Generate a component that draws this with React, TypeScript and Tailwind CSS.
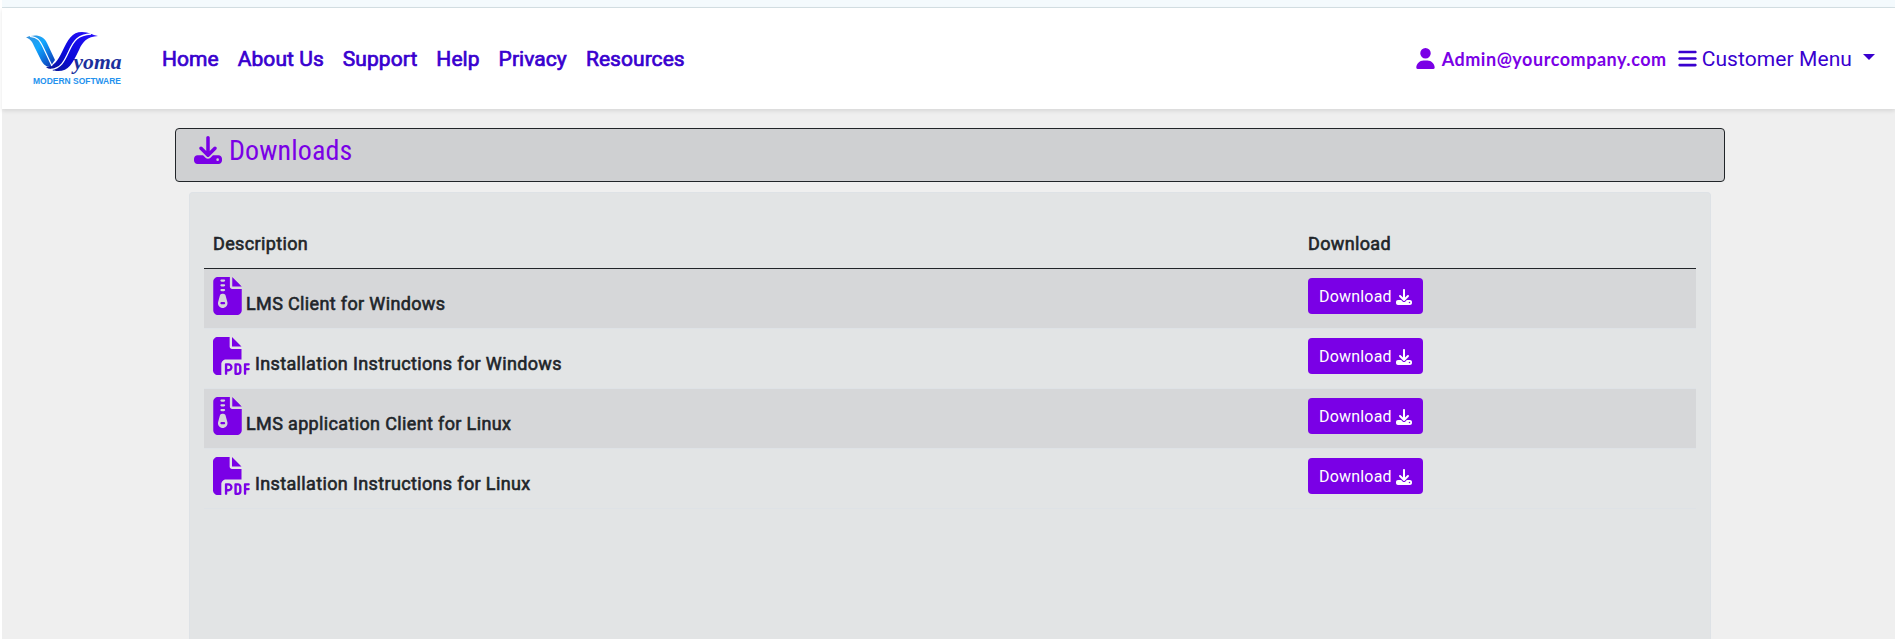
import { FaBars, FaDownload, FaFilePdf, FaFileZipper, FaUser } from "react-icons/fa6";

const NAV_LINKS = ["Home", "About Us", "Support", "Help", "Privacy", "Resources"];

const DOWNLOADS = [
  { id: 1, kind: "zip", name: "LMS Client for Windows" },
  { id: 2, kind: "pdf", name: "Installation Instructions for Windows" },
  { id: 3, kind: "zip", name: "LMS application Client for Linux" },
  { id: 4, kind: "pdf", name: "Installation Instructions for Linux" },
];

function Logo() {
  return (
    <svg width="98" height="54" viewBox="0 0 98 54" className="overflow-visible">
      <defs>
        <linearGradient id="left" x1="0" y1="0" x2="1" y2="1">
          <stop offset="0" stopColor="#3a8fd8" />
          <stop offset="0.4" stopColor="#12a8ff" />
          <stop offset="1" stopColor="#0a2fb0" />
        </linearGradient>
        <linearGradient id="right" x1="1" y1="0" x2="0" y2="1">
          <stop offset="0" stopColor="#2a10ff" />
          <stop offset="0.6" stopColor="#0a08d8" />
          <stop offset="1" stopColor="#0a1a90" />
        </linearGradient>
      </defs>
      <path d="M0 5.500C9 2 17 3 21 11L29 28L24 35C20 35 17 32 15 28L8 14C6 9 4 7 0 5.500Z" fill="url(#left)" />
      <path d="M20 35C28 35 32 28 36 20C42 7 46 0 56 0C63 0 66 3 72 4C61 5 57 9 53 18C46 32 43 39 32 39C28 39 25 38 26 37C23 37 21 36 20 35Z" fill="url(#right)" />
      <path d="M4 4.500C12 5 14 9 17 15L26 34" fill="none" stroke="#fff" strokeWidth="1.200" />
      <path d="M25 37.500C35 36 38 30 43 19C48 8 52 3 65 2" fill="none" stroke="#fff" strokeWidth="1.300" />
      <text
        x="47.500"
        y="37"
        textLength="48"
        lengthAdjust="spacingAndGlyphs"
        className="fill-[#1c2f9c] font-['Liberation_Serif',serif] text-[21px] font-bold italic"
      >
        yoma
      </text>
      <text
        x="7"
        y="51.500"
        textLength="88"
        lengthAdjust="spacingAndGlyphs"
        className="fill-[#2492ee] font-['Liberation_Sans',sans-serif] text-[8.5px] font-bold"
      >
        MODERN SOFTWARE
      </text>
    </svg>
  );
}

export default function App() {
  return (
    <div className="flex h-[639px] flex-col overflow-hidden bg-white pl-0.5 font-[Roboto,sans-serif] text-[#212529]">
      <div className="h-2 shrink-0 border-b border-[#d5e0e4] bg-[#f4fafd]" />
      <header className="relative flex h-[101px] shrink-0 items-center bg-white pr-5 pl-6 shadow-[0_2px_4px_rgba(0,0,0,0.1)]">
        <Logo />
        <nav className="ml-[38px] flex gap-[19px] pt-0.5 text-[21px] tracking-[0.06px] text-[#3900cf] [-webkit-text-stroke:0.7px]">
          {NAV_LINKS.map((link) => (
            <a key={link} href="#">
              {link}
            </a>
          ))}
        </nav>
        <div className="ml-auto flex items-center text-[#3900cf]">
          <FaUser className="size-[21px] text-[#7a00e6]" />
          <span className="ml-1.5 font-[Lato,sans-serif] text-lg font-bold tracking-[0.53px] text-[#7a00e6]">
            Admin@yourcompany.com
          </span>
          <button className="ml-2.5 flex items-center text-[21px]">
            <FaBars className="size-[21px]" />
            <span className="ml-1 pt-0.5 tracking-[0.08px]">Customer Menu</span>
            <svg viewBox="0 0 12 6" className="mb-1 ml-[11px] h-1.5 w-3" fill="currentColor">
              <path d="M0 0h12L6 6z" />
            </svg>
          </button>
        </div>
      </header>

      <main className="flex flex-1 flex-col bg-[#efefef] pt-[19px] pr-[170px] pl-[173px]">
        <div className="flex h-[54px] shrink-0 items-start rounded border border-[#212529] bg-[#cfd0d2] pt-[7px] pl-[18px] text-[#7a00e6]">
          <FaDownload className="size-7" />
          <h1 className="ml-[7px] font-['Roboto_Condensed',Roboto,sans-serif] text-[28px] leading-[29px] tracking-[0.1px]">Downloads</h1>
        </div>

        <section className="mt-[10px] mr-[14px] ml-[14px] flex-1 rounded-t border border-b-0 border-[#dee2e6] bg-[#e2e4e5] px-[14px] pt-[27px]">
          <table className="w-full table-fixed border-separate border-spacing-0 text-left text-lg tracking-[0.36px]">
            <thead className="[-webkit-text-stroke:0.6px]">
              <tr>
                <th className="h-[49px] w-[1095px] border-b border-b-[#212529] px-[9px] font-normal">Description</th>
                <th className="h-[49px] border-b border-b-[#212529] px-[9px] font-normal">Download</th>
              </tr>
            </thead>
            <tbody>
              {DOWNLOADS.map((item) => (
                <tr key={item.id} className="odd:bg-[#d6d7d9]">
                  <td className="h-[60px] border-b border-[#dee2e6] px-[9px] pt-2 align-top">
                    <div className="flex">
                      {item.kind === "zip" ? (
                        <FaFileZipper className="h-[38px] w-[29px] text-[#7a00e6]" />
                      ) : (
                        <FaFilePdf className="h-[38px] w-[38px] text-[#7a00e6]" />
                      )}
                      <span className="mt-[13px] ml-1 [-webkit-text-stroke:0.6px]">{item.name}</span>
                    </div>
                  </td>
                  <td className="h-[60px] border-b border-[#dee2e6] px-[9px] pt-[9px] align-top">
                    <button className="flex h-9 w-[115px] items-center rounded bg-[#7a00e6] pt-px pl-[11px] text-base tracking-[0.2px] text-white">
                      Download
                      <FaDownload className="ml-1 size-4" />
                    </button>
                  </td>
                </tr>
              ))}
            </tbody>
          </table>
        </section>
      </main>
    </div>
  );
}
